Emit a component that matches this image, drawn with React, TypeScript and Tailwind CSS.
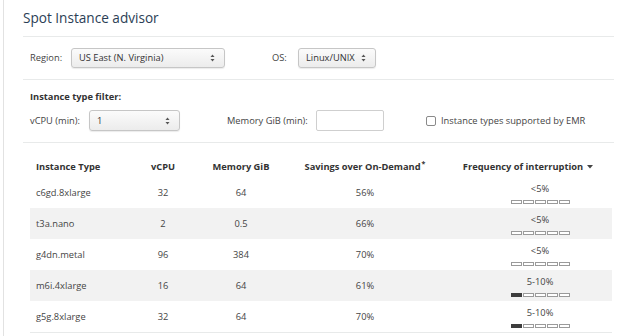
import React from "react";

const Arrows = () => (
  <svg width="5" height="8" viewBox="0 0 5 8" className="shrink-0">
    <path d="M2.5 0.5 L4.5 3 L0.5 3 Z" fill="#555" />
    <path d="M2.5 7.5 L4.5 5 L0.5 5 Z" fill="#555" />
  </svg>
);

const Select = ({ text, w, h }: { text: string; w: string; h: string }) => (
  <div
    className={`${w} ${h} flex items-center justify-between pl-[7px] pr-[9px] border border-[#c6c6c6] rounded-[3px] bg-gradient-to-b from-[#fbfbfb] to-[#ececec] shadow-[0_1px_1px_rgba(0,0,0,0.08)] text-[#333]`}
  >
    <span>{text}</span>
    <Arrows />
  </div>
);

const Bars = ({ filled }: { filled: number }) => (
  <div className="flex gap-[1px] mt-[4px]">
    {[0, 1, 2, 3, 4].map((i) => (
      <div
        key={i}
        className={
          i < filled
            ? "w-[11px] h-[4px] bg-[#3d3d3d] border border-[#3d3d3d]"
            : "w-[11px] h-[4px] bg-white border border-[#9a9a9a]"
        }
      />
    ))}
  </div>
);

const rows = [
  { t: "c6gd.8xlarge", v: "32", m: "64", s: "56%", f: "<5%", n: 0 },
  { t: "t3a.nano", v: "2", m: "0.5", s: "66%", f: "<5%", n: 0 },
  { t: "g4dn.metal", v: "96", m: "384", s: "70%", f: "<5%", n: 0 },
  { t: "m6i.4xlarge", v: "16", m: "64", s: "61%", f: "5-10%", n: 1 },
  { t: "g5g.8xlarge", v: "32", m: "64", s: "70%", f: "5-10%", n: 1 },
];

const cols = "grid grid-cols-[100px_66px_90px_158px_168px]";

export default function App() {
  return (
    <div className="w-[624px] h-[336px] bg-white overflow-hidden font-['Open_Sans',sans-serif] text-[9.3px] text-[#444]">
      <div className="ml-[3px] h-full border-l border-[#e2e2e2] pl-[19px] pr-[10px]">
        <div className="h-[36px] pt-[8px]">
          <h1 className="text-[13.6px] leading-[20px] text-[#2b3e55]">Spot Instance advisor</h1>
        </div>
        <div className="border-t border-[#e8eaea]" />
        <div className="h-[42px] pt-[11px] pl-[7px] flex items-start">
          <span className="w-[41px] h-[20px] flex items-center">Region:</span>
          <Select text="US East (N. Virginia)" w="w-[154px]" h="h-[20px]" />
          <span className="ml-[47px] w-[26px] h-[20px] flex items-center">OS:</span>
          <Select text="Linux/UNIX" w="w-[78px]" h="h-[20px]" />
        </div>
        <div className="border-t border-[#e8eaea]" />
        <div className="h-[62px] pt-[10px] pl-[7px]">
          <div className="font-bold leading-[14px] text-[#333]">Instance type filter:</div>
          <div className="mt-[6px] flex items-center h-[21px]">
            <span className="w-[59px]">vCPU (min):</span>
            <Select text="1" w="w-[91px]" h="h-[21px]" />
            <span className="ml-[47px] w-[89px]">Memory GiB (min):</span>
            <div className="w-[68px] h-[21px] border border-[#cfcfcf] rounded-[2px] bg-white" />
            <div className="ml-[42px] w-[10px] h-[10px] border border-[#8a8a8a] rounded-[2px] bg-white" />
            <span className="ml-[5px]">Instance types supported by EMR</span>
          </div>
        </div>
        <div className="border-t border-[#e8eaea]" />
        <div className="ml-[7px] w-[582px]">
          <div className={`${cols} h-[34px] pt-[13px] items-center font-bold text-[#333]`}>
            <div className="pl-[6px]">Instance Type</div>
            <div className="text-center">vCPU</div>
            <div className="text-center">Memory GiB</div>
            <div className="text-center flex items-start justify-center">
              <span>Savings over On-Demand</span>
              <span className="text-[7px] leading-[7px] ml-[1px]">*</span>
            </div>
            <div className="text-center flex items-center justify-center gap-[4px]">
              Frequency of interruption
              <svg width="6" height="4" viewBox="0 0 6 4">
                <path d="M0 0 L6 0 L3 3.5 Z" fill="#444" />
              </svg>
            </div>
          </div>
          <div className="border-b border-[#e8eaea]">
            {rows.map((r, i) => (
              <div
                key={r.t}
                className={`${cols} h-[31px] items-center ${i % 2 === 1 ? "bg-[#f2f2f2]" : "bg-white"}`}
              >
                <div className="pl-[6px]">{r.t}</div>
                <div className="text-center">{r.v}</div>
                <div className="text-center">{r.m}</div>
                <div className="text-center">{r.s}</div>
                <div className="pl-[24px] h-full pt-[5px] flex flex-col items-center">
                  <div className="leading-[14px]">{r.f}</div>
                  <Bars filled={r.n} />
                </div>
              </div>
            ))}
          </div>
        </div>
      </div>
    </div>
  );
}
